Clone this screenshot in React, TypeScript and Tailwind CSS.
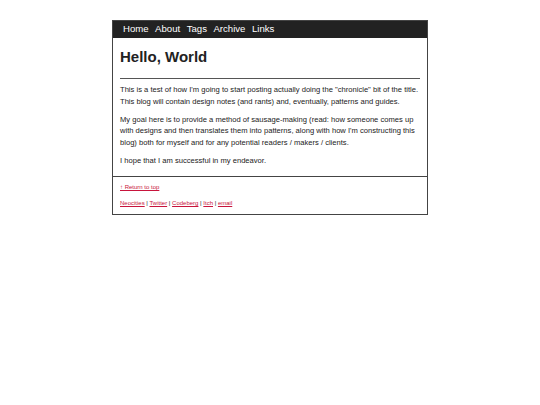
export default function App() {
  const nav = ['Home', 'About', 'Tags', 'Archive', 'Links']
  const links = ['Neocities', 'Twitter', 'Codeberg', 'Itch', 'email']
  return (
    <div className="min-h-[405px] w-full bg-white pt-[20px] font-['Liberation_Sans',Arial,sans-serif] text-[#222]">
      <div className="mx-auto w-[316px] border border-[#444]">
        <nav className="flex h-[17px] items-center gap-[6.5px] bg-[#222] px-[10px] text-[9.6px] text-white">
          {nav.map((n) => (
            <a key={n}>{n}</a>
          ))}
        </nav>
        <main className="px-[7px] pb-[9px]">
          <h1 className="pt-[9px] text-[15px] font-bold leading-[20px]">Hello, World</h1>
          <hr className="mt-[11px] border-t border-[#555]" />
          <div className="pt-[5px] text-[7.6px] leading-[11.8px]">
            <p className="mb-[6px]">
              This is a test of how I'm going to start posting actually doing the "chronicle" bit of the title.
              This blog will contain design notes (and rants) and, eventually, patterns and guides.
            </p>
            <p className="mb-[6px]">
              My goal here is to provide a method of sausage-making (read: how someone comes up with designs and
              then translates them into patterns, along with how I'm constructing this blog) both for myself and for
              any potential readers / makers / clients.
            </p>
            <p>I hope that I am successful in my endeavor.</p>
          </div>
        </main>
        <footer className="border-t border-[#444] px-[7px] pb-[7px] pt-[6px] text-[6px] leading-[8px]">
          <p>
            <a className="text-[#c8143c] underline">↑ Return to top</a>
          </p>
          <p className="mt-[8px]">
            {links.map((l, i) => (
              <span key={l}>
                <a className="text-[#c8143c] underline">{l}</a>
                {i < links.length - 1 && ' | '}
              </span>
            ))}
          </p>
        </footer>
      </div>
    </div>
  )
}
